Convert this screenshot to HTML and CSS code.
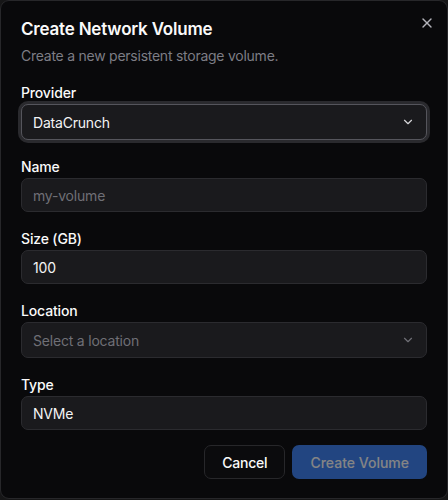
FILE: index.html
```html
<!DOCTYPE html>
<html lang="en">
<head>
<meta charset="utf-8">
<title>Create Network Volume</title>
<link rel="stylesheet" href="styles.css">
</head>
<body>
<div class="dialog" role="dialog">
  <button class="close" aria-label="Close">
    <svg viewBox="0 0 24 24" width="16" height="16" fill="none" stroke="currentColor" stroke-width="2" stroke-linecap="round" stroke-linejoin="round"><path d="M18 6 6 18"/><path d="m6 6 12 12"/></svg>
  </button>
  <div class="header">
    <h2 class="title">Create Network Volume</h2>
    <p class="desc">Create a new persistent storage volume.</p>
  </div>
  <div class="form">
    <div class="field">
      <label class="label">Provider</label>
      <div class="select focused">
        <span class="value">DataCrunch</span>
        <svg class="chev" viewBox="0 0 24 24" width="14" height="14" fill="none" stroke="currentColor" stroke-width="2" stroke-linecap="round" stroke-linejoin="round"><path d="m6 9 6 6 6-6"/></svg>
      </div>
    </div>
    <div class="field">
      <label class="label">Name</label>
      <div class="input"><span class="placeholder">my-volume</span></div>
    </div>
    <div class="field">
      <label class="label">Size (GB)</label>
      <div class="input"><span class="value">100</span></div>
    </div>
    <div class="field">
      <label class="label">Location</label>
      <div class="select">
        <span class="placeholder">Select a location</span>
        <svg class="chev dim" viewBox="0 0 24 24" width="14" height="14" fill="none" stroke="currentColor" stroke-width="2" stroke-linecap="round" stroke-linejoin="round"><path d="m6 9 6 6 6-6"/></svg>
      </div>
    </div>
    <div class="field">
      <label class="label">Type</label>
      <div class="input"><span class="value">NVMe</span></div>
    </div>
  </div>
  <div class="footer">
    <button class="btn outline">Cancel</button>
    <button class="btn primary" disabled>Create Volume</button>
  </div>
</div>
</body>
</html>
```
FILE: styles.css
```css
* { box-sizing: border-box; }
html, body { margin: 0; padding: 0; }
body {
  background: #161617;
  font-family: Inter, "Liberation Sans", sans-serif;
  color: #fafafa;
  width: 448px;
  height: 500px;
  overflow: hidden;
}
.dialog {
  position: relative;
  width: 448px;
  height: 499px;
  background: #09090b;
  border: 1px solid #27272a;
  border-radius: 9px;
  padding: 19px 20px 19px 20px;
  display: flex;
  flex-direction: column;
}
.close {
  position: absolute;
  top: 14px;
  right: 12px;
  width: 16px;
  height: 16px;
  padding: 0;
  border: 0;
  background: none;
  color: #b4b4bb;
  display: flex;
}
.header {
  display: flex;
  flex-direction: column;
  gap: 8px;
}
.title {
  margin: 0;
  font-size: 17px;
  line-height: 18px;
  font-weight: 600;
  letter-spacing: -0.2px;
}
.desc {
  margin: 0;
  font-size: 14px;
  line-height: 20px;
  color: #7d7d85;
  letter-spacing: -0.25px;
}
.form {
  margin-top: 20px;
  display: flex;
  flex-direction: column;
  gap: 20px;
}
.field {
  display: flex;
  flex-direction: column;
  gap: 4px;
}
.label {
  font-size: 14px;
  line-height: 14px;
  font-weight: 500;
  color: #fafafa;
  letter-spacing: -0.15px;
}
.input, .select {
  height: 34px;
  border: 1px solid #2b2b2f;
  border-radius: 7px;
  background: #1a1a1d;
  padding: 0 11px;
  display: flex;
  align-items: center;
  font-size: 14px;
  letter-spacing: -0.2px;
}
.select {
  height: 36px;
  justify-content: space-between;
  padding-right: 11px;
}
.select.focused {
  border-color: #55555c;
  box-shadow: 0 0 0 3px #2a2a2e;
}
.value { color: #f4f4f5; }
.placeholder { color: #6f6f76; }
.chev { color: #d4d4d8; }
.chev.dim { color: #6f6f76; }
.footer {
  margin-top: 15px;
  display: flex;
  justify-content: flex-end;
  gap: 7px;
}
.btn {
  height: 34px;
  border-radius: 7px;
  font-family: Inter, "Liberation Sans", sans-serif;
  font-size: 14px;
  font-weight: 500;
  padding: 0 18px;
  color: #fafafa;
}
.btn.outline {
  background: #0b0b0d;
  border: 1px solid #27272a;
  padding: 0 17px;
  letter-spacing: -0.2px;
}
.btn.primary {
  background: #3b82f6;
  border: 0;
  color: #ffffff;
  opacity: 0.5;
}
```
